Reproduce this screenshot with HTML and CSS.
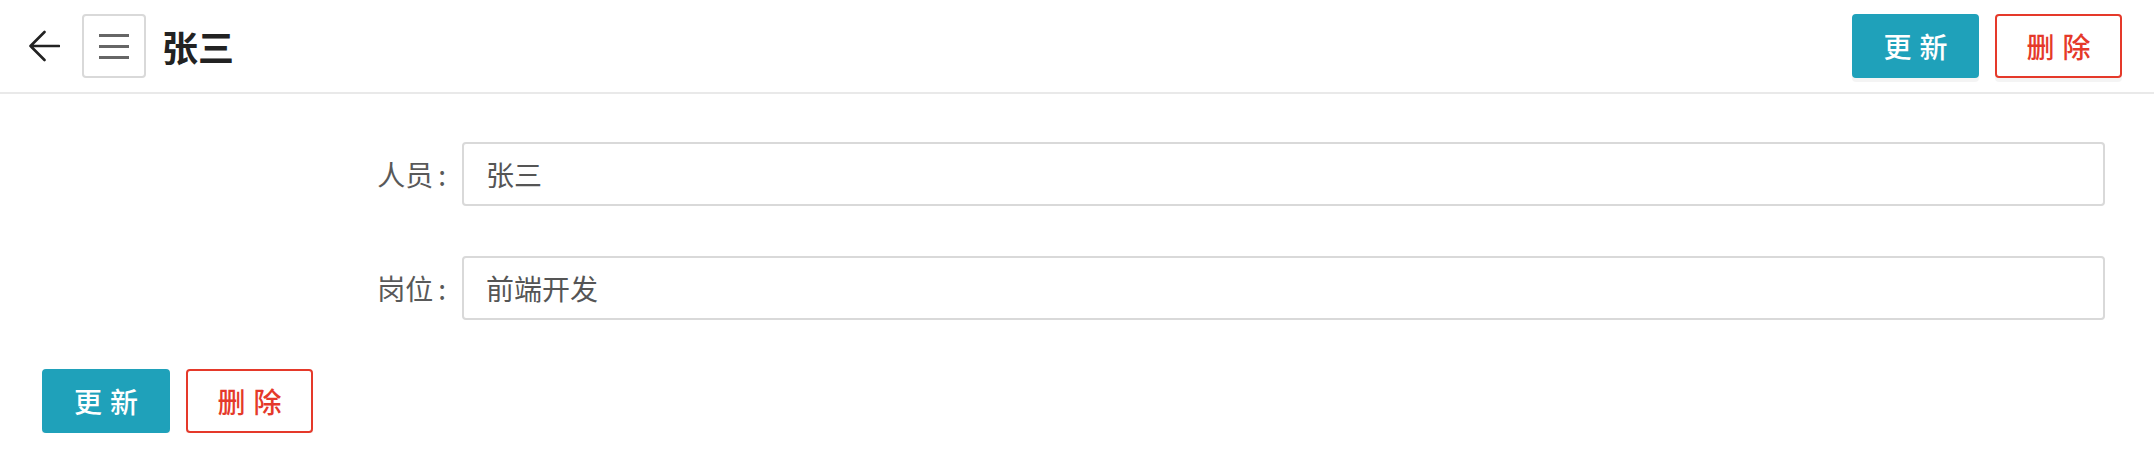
FILE: index.html
```html
<!DOCTYPE html>
<html lang="zh-CN">
<head>
<meta charset="utf-8">
<title>张三</title>
<link rel="stylesheet" href="styles.css">
</head>
<body>
<header class="topbar">
  <a class="back" href="#" aria-label="返回">
    <svg width="32" height="32" viewBox="0 0 32 32" fill="none" stroke="#222" stroke-width="2.6" stroke-linecap="round" stroke-linejoin="round"><path d="M31 16H2.5M16.5 2L2.5 16l14 14"/></svg>
  </a>
  <button class="menu-btn" aria-label="菜单">
    <svg width="30" height="26" viewBox="0 0 30 26" fill="none" stroke="#666" stroke-width="2.8"><path d="M0 2.5h30M0 13.5h30M0 24.5h30"/></svg>
  </button>
  <h1 class="title">张三</h1>
  <div class="top-actions">
    <button class="btn btn-primary">更新</button>
    <button class="btn btn-danger">删除</button>
  </div>
</header>
<main class="content">
  <form class="form">
    <label class="label" for="person">人员</label>
    <input class="input" id="person" value="张三" readonly>
    <label class="label" for="post">岗位</label>
    <input class="input" id="post" value="前端开发" readonly>
  </form>
  <div class="actions">
    <button class="btn btn-primary">更新</button>
    <button class="btn btn-danger">删除</button>
  </div>
</main>
</body>
</html>
```

FILE: styles.css
```css
html, body {
  margin: 0;
  padding: 0;
  background: #fff;
  font-family: "Noto Sans CJK SC", "Noto Sans", sans-serif;
}

.topbar {
  display: flex;
  align-items: center;
  height: 92px;
  border-bottom: 2px solid #e9e9e9;
  padding: 0 32px 0 28px;
}

.back {
  display: flex;
  width: 32px;
  height: 32px;
}

.menu-btn {
  display: flex;
  align-items: center;
  justify-content: center;
  box-sizing: border-box;
  width: 64px;
  height: 64px;
  margin-left: 22px;
  padding: 0;
  background: #fff;
  border: 2px solid #d9d9d9;
  border-radius: 4px;
}

.title {
  margin: 0 0 0 16px;
  font-size: 36px;
  font-weight: 700;
  color: #222;
  line-height: 1;
}

.top-actions {
  display: flex;
  gap: 16px;
  margin-left: auto;
}

.btn {
  box-sizing: border-box;
  width: 127px;
  height: 64px;
  padding: 0 0 0 8px;
  font-family: inherit;
  font-size: 28px;
  font-weight: 500;
  letter-spacing: 8px;
  border-radius: 4px;
  border: 2px solid transparent;
  box-shadow: 0 4px 0 rgba(0, 0, 0, 0.045);
  cursor: pointer;
}

.btn-primary {
  background: #1fa1ba;
  border-color: #1fa1ba;
  color: #fff;
}

.btn-danger {
  background: #fff;
  border-color: #e5392a;
  color: #e5392a;
}

.content {
  padding: 48px 49px 0 42px;
}

.form {
  display: grid;
  grid-template-columns: 420px 1fr;
  row-gap: 50px;
  align-items: center;
}

.label {
  text-align: right;
  font-size: 28px;
  color: #595959;
}

.label::after {
  content: ":";
  margin: 0 16px 0 5px;
}

.input {
  box-sizing: border-box;
  width: 100%;
  height: 64px;
  padding: 0 22px;
  font-family: inherit;
  font-size: 28px;
  color: #555;
  border: 2px solid #d9d9d9;
  border-radius: 4px;
  outline: none;
}

.actions {
  display: flex;
  gap: 16px;
  margin-top: 49px;
}

.actions .btn:first-child {
  width: 128px;
}
```
